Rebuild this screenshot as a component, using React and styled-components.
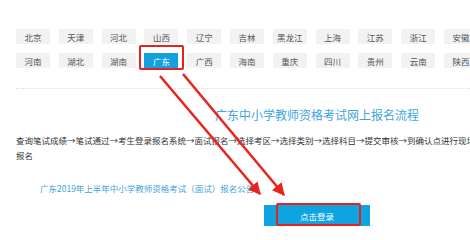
import React from 'react';
import styled, { createGlobalStyle } from 'styled-components';

const rows = [
    ['北京', '天津', '河北', '山西', '辽宁', '吉林', '黑龙江', '上海', '江苏', '浙江', '安徽'],
    ['河南', '湖北', '湖南', '广东', '广西', '海南', '重庆', '四川', '贵州', '云南', '陕西'],
];

const steps = ['查询笔试成绩', '笔试通过', '考生登录报名系统', '面试报名', '选择考区', '选择类别', '选择科目', '提交审核', '到确认点进行现场报名'];

export default function App() {
    return (
        <PageStyle>
            <GlobalStyle />
            <ProvinceGrid>
                {rows.map((row, i) => (
                    <ProvinceRow key={i}>
                        {row.map((name) => (
                            <ProvinceBtn key={name} $active={name === '广东'}>
                                {name}
                                {name === '广东' && <MarkBox $top={-8} $left={-5} $right={-6} $bottom={-2} />}
                            </ProvinceBtn>
                        ))}
                    </ProvinceRow>
                ))}
            </ProvinceGrid>
            <Divider />
            <GuideStyle>
                <TitleStyle>广东中小学教师资格考试网上报名流程</TitleStyle>
                <StepsText>{steps.join('→')}</StepsText>
                <NoticeLink>广东2019年上半年中小学教师资格考试（面试）报名公告</NoticeLink>
                <LoginBtn>
                    点击登录
                    <MarkBox $top={-2} $left={12} $right={9} $bottom={0} />
                </LoginBtn>
            </GuideStyle>
            <ArrowLayer width="470" height="240" viewBox="0 0 470 240">
                <defs>
                    <marker id="head" viewBox="0 0 10 10" refX="9" refY="5" markerWidth="5.5" markerHeight="5" orient="auto" markerUnits="strokeWidth">
                        <path d="M0 0 L10 5 L0 10 Z" fill="#e8231c" />
                    </marker>
                </defs>
                <line x1="160" y1="76" x2="260" y2="194" stroke="#e8231c" strokeWidth="2.5" markerEnd="url(#head)" />
                <line x1="183" y1="74" x2="284" y2="195" stroke="#e8231c" strokeWidth="2.5" markerEnd="url(#head)" />
            </ArrowLayer>
        </PageStyle>
    );
};

const GlobalStyle = createGlobalStyle`
    html, body {
        margin: 0;
        padding: 0;
        background: #ffffff;
        overflow: hidden;
    }
    body {
        font-family: "Noto Sans CJK SC", "Noto Sans", sans-serif;
    }
`;

const PageStyle = styled.div`
    position: relative;
    width: 470px;
    height: 240px;
    overflow: hidden;
    padding-top: 29px;
    box-sizing: border-box;
    background: #ffffff;
`;

const ProvinceGrid = styled.div`
    display: flex;
    flex-direction: column;
    gap: 9px;
    padding-left: 16px;
`;

const ProvinceRow = styled.div`
    display: flex;
    gap: 8.8px;
    white-space: nowrap;
`;

const ProvinceBtn = styled.div`
    position: relative;
    display: flex;
    justify-content: center;
    align-items: center;
    flex: 0 0 34px;
    height: 15px;

    font-size: 8.5px;
    color: ${(p) => (p.$active ? '#ffffff' : '#555555')};
    background: ${(p) => (p.$active ? '#12a0e0' : '#f2f2f2')};
`;

const MarkBox = styled.span`
    position: absolute;
    top: ${(p) => p.$top}px;
    left: ${(p) => p.$left}px;
    right: ${(p) => p.$right}px;
    bottom: ${(p) => p.$bottom}px;
    border: 2px solid #e5231d;
    border-radius: 2px;
    pointer-events: none;
`;

const Divider = styled.div`
    margin: 20px 0 0 16px;
    width: 454px;
    border-top: 1px dotted #dcdcdc;
`;

const GuideStyle = styled.div`
    display: flex;
    flex-direction: column;
    width: 602px;
    margin-left: 16px;
`;

const TitleStyle = styled.div`
    margin-top: 18px;
    text-align: center;
    font-size: 12px;
    line-height: 16px;
    color: #3ea4de;
`;

const StepsText = styled.p`
    margin: 10px 0 0 0;
    width: 462px;
    font-size: 8.5px;
    line-height: 15px;
    color: #333333;
`;

const NoticeLink = styled.a`
    margin: 18px 0 0 24px;
    font-size: 8.5px;
    line-height: 15px;
    color: #45a2de;
    text-decoration: none;
`;

const LoginBtn = styled.div`
    position: relative;
    align-self: center;
    display: flex;
    justify-content: center;
    align-items: center;
    width: 106px;
    height: 21px;
    margin-top: 9px;

    font-size: 8.5px;
    color: #ffffff;
    background: #0fa3e2;
`;

const ArrowLayer = styled.svg`
    position: absolute;
    left: 0;
    top: 0;
    pointer-events: none;
`;
